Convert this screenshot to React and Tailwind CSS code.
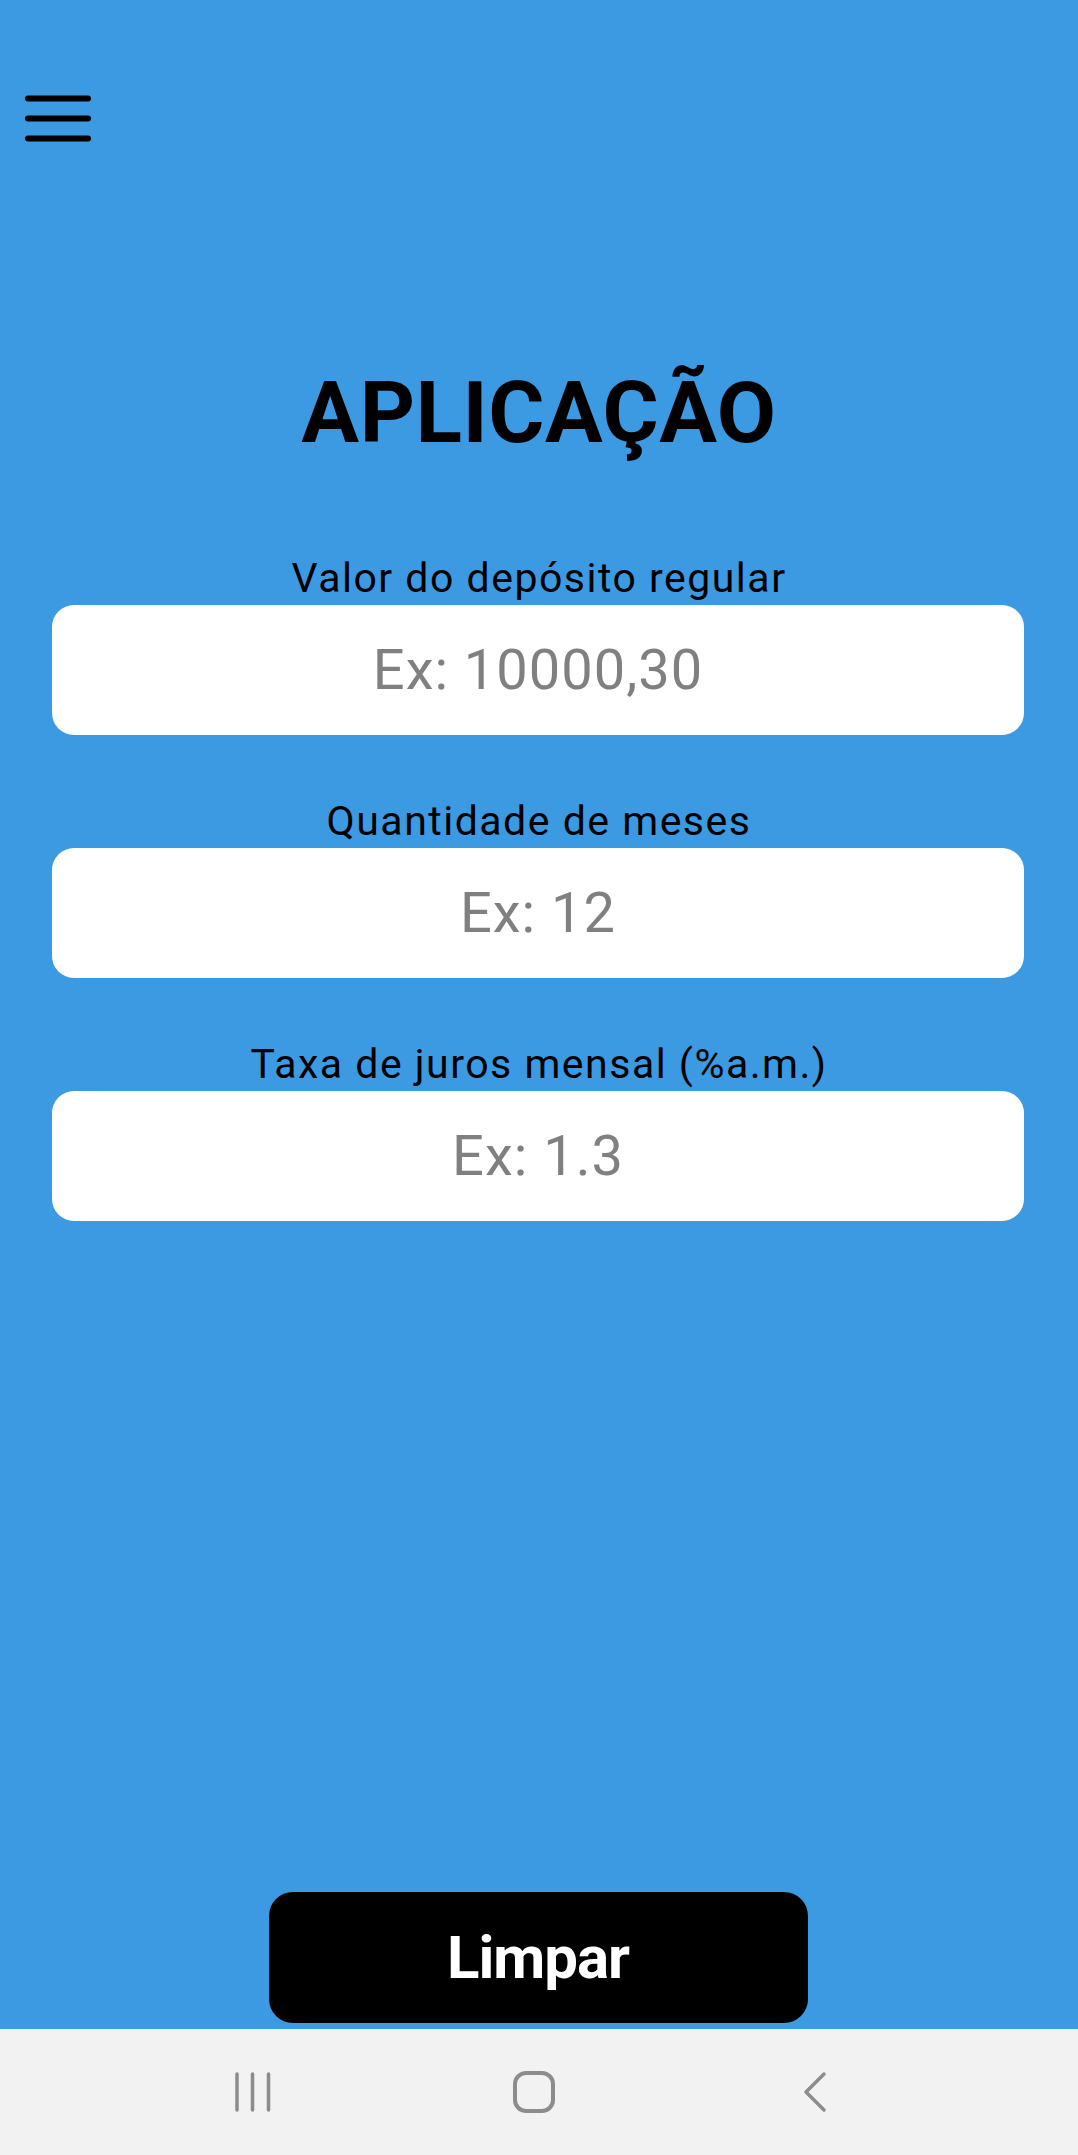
import React from "react";

function Field({ label, placeholder, first }) {
  return (
    <div className={`flex flex-col items-center ${first ? "" : "mt-[63px]"}`}>
      <div className="text-[41px] leading-[47px] tracking-[1.5px] text-black">{label}</div>
      <input
        type="text"
        placeholder={placeholder}
        className="mt-[3px] ml-[-2px] h-[130px] w-[972px] rounded-[22px] bg-white text-center text-[56px] tracking-[1px] text-black outline-none placeholder:text-[#808080]"
      />
    </div>
  );
}

export default function App() {
  return (
    <div
      className="flex h-[2155px] w-[1078px] flex-col"
      style={{ fontFamily: "Roboto, 'Noto Sans', sans-serif" }}
    >
      <div className="flex flex-1 flex-col bg-[#3c9ae3]">
        <div className="pl-[25px] pt-[95px]">
          <svg width="66" height="47" viewBox="0 0 66 47">
            <g stroke="#000" strokeWidth="6" strokeLinecap="round">
              <line x1="3" y1="3.5" x2="63" y2="3.5" />
              <line x1="3" y1="23.5" x2="63" y2="23.5" />
              <line x1="3" y1="43.5" x2="63" y2="43.5" />
            </g>
          </svg>
        </div>
        <h1 className="mt-[221px] text-center text-[86px] font-bold leading-[100px] tracking-[0.5px] text-black">
          APLICAÇÃO
        </h1>
        <div className="mt-[92px]">
          <Field first label="Valor do depósito regular" placeholder="Ex: 10000,30" />
          <Field label="Quantidade de meses" placeholder="Ex: 12" />
          <Field label="Taxa de juros mensal (%a.m.)" placeholder="Ex: 1.3" />
        </div>
        <div className="mt-auto mb-[6px] flex justify-center">
          <button className="ml-[-2px] flex h-[131px] w-[539px] items-center justify-center rounded-[24px] bg-black text-[60px] font-bold tracking-[-1px] text-white">
            Limpar
          </button>
        </div>
      </div>
      <div className="flex h-[126px] items-center bg-[#f2f2f2] pl-[112px]">
        <div className="flex w-[281px] justify-center">
          <svg width="36" height="42" viewBox="0 0 36 42">
            <g stroke="#8c8c8c" strokeWidth="3.5" strokeLinecap="round">
              <line x1="2" y1="3" x2="2" y2="39" />
              <line x1="17.5" y1="3" x2="17.5" y2="39" />
              <line x1="33.5" y1="3" x2="33.5" y2="39" />
            </g>
          </svg>
        </div>
        <div className="flex w-[281px] justify-center">
          <svg width="44" height="44" viewBox="0 0 44 44">
            <rect x="3" y="3" width="38" height="38" rx="11" fill="none" stroke="#8c8c8c" strokeWidth="4" />
          </svg>
        </div>
        <div className="flex w-[281px] justify-center">
          <svg width="26" height="42" viewBox="0 0 26 42">
            <polyline
              points="22,3 4,21 22,39"
              fill="none"
              stroke="#8c8c8c"
              strokeWidth="3.5"
              strokeLinecap="round"
              strokeLinejoin="round"
            />
          </svg>
        </div>
      </div>
    </div>
  );
}
